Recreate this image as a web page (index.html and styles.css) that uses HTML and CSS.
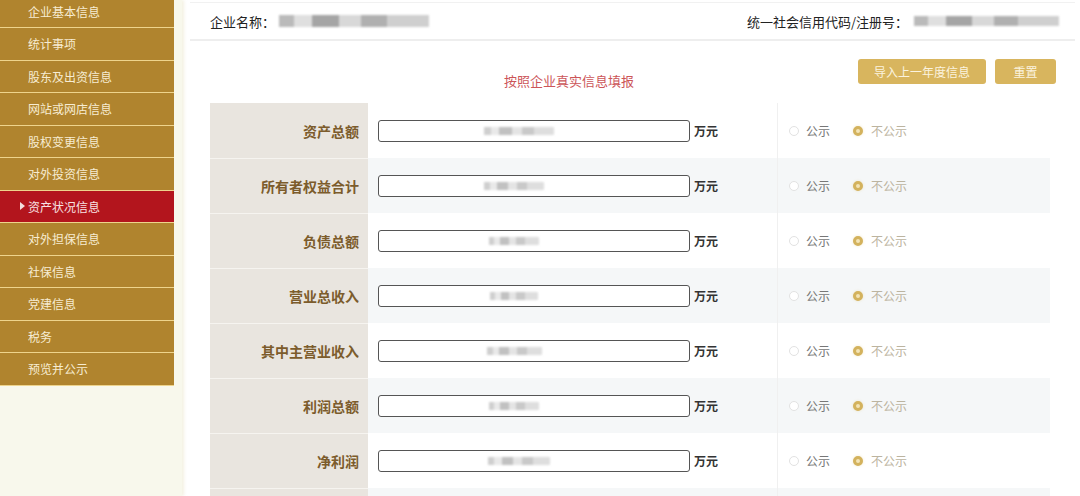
FILE: index.html
```html
<!DOCTYPE html>
<html lang="zh-CN">
<head>
<meta charset="utf-8">
<title>资产状况信息</title>
<link rel="stylesheet" href="styles.css">
</head>
<body>
<div class="page">
  <aside class="sidebar">
    <ul class="nav">
      <li class="nav-item">企业基本信息</li>
      <li class="nav-item">统计事项</li>
      <li class="nav-item">股东及出资信息</li>
      <li class="nav-item">网站或网店信息</li>
      <li class="nav-item">股权变更信息</li>
      <li class="nav-item">对外投资信息</li>
      <li class="nav-item active"><span class="caret"></span>资产状况信息</li>
      <li class="nav-item">对外担保信息</li>
      <li class="nav-item">社保信息</li>
      <li class="nav-item">党建信息</li>
      <li class="nav-item">税务</li>
      <li class="nav-item">预览并公示</li>
    </ul>
  </aside>
  <main class="main">
    <header class="info-bar">
      <div class="info-item">企业名称：<span class="blur blur-name"></span></div>
      <div class="info-item">统一社会信用代码/注册号：<span class="blur blur-code"></span></div>
    </header>
    <div class="toolbar">
      <div class="notice">按照企业真实信息填报</div>
      <div class="actions">
        <button class="btn btn-wide">导入上一年度信息</button>
        <button class="btn">重置</button>
      </div>
    </div>
    <div class="table">
      <div class="row">
        <div class="label">资产总额</div>
        <div class="field"><div class="input"><span class="blur bv1"></span></div><span class="unit">万元</span></div>
        <div class="pub"><span class="radio"></span><span class="opt">公示</span><span class="radio on"></span><span class="opt off">不公示</span></div>
      </div>
      <div class="row alt">
        <div class="label">所有者权益合计</div>
        <div class="field"><div class="input"><span class="blur bv2"></span></div><span class="unit">万元</span></div>
        <div class="pub"><span class="radio"></span><span class="opt">公示</span><span class="radio on"></span><span class="opt off">不公示</span></div>
      </div>
      <div class="row">
        <div class="label">负债总额</div>
        <div class="field"><div class="input"><span class="blur bv3"></span></div><span class="unit">万元</span></div>
        <div class="pub"><span class="radio"></span><span class="opt">公示</span><span class="radio on"></span><span class="opt off">不公示</span></div>
      </div>
      <div class="row alt">
        <div class="label">营业总收入</div>
        <div class="field"><div class="input"><span class="blur bv4"></span></div><span class="unit">万元</span></div>
        <div class="pub"><span class="radio"></span><span class="opt">公示</span><span class="radio on"></span><span class="opt off">不公示</span></div>
      </div>
      <div class="row">
        <div class="label">其中主营业收入</div>
        <div class="field"><div class="input"><span class="blur bv5"></span></div><span class="unit">万元</span></div>
        <div class="pub"><span class="radio"></span><span class="opt">公示</span><span class="radio on"></span><span class="opt off">不公示</span></div>
      </div>
      <div class="row alt">
        <div class="label">利润总额</div>
        <div class="field"><div class="input"><span class="blur bv6"></span></div><span class="unit">万元</span></div>
        <div class="pub"><span class="radio"></span><span class="opt">公示</span><span class="radio on"></span><span class="opt off">不公示</span></div>
      </div>
      <div class="row">
        <div class="label">净利润</div>
        <div class="field"><div class="input"><span class="blur bv7"></span></div><span class="unit">万元</span></div>
        <div class="pub"><span class="radio"></span><span class="opt">公示</span><span class="radio on"></span><span class="opt off">不公示</span></div>
      </div>
      <div class="row alt row-partial">
        <div class="label"></div>
        <div class="field"></div>
        <div class="pub"></div>
      </div>
    </div>
  </main>
</div>
</body>
</html>
```
FILE: styles.css
```css
* { box-sizing: border-box; }
html, body {
  margin: 0;
  padding: 0;
  width: 1080px;
  height: 496px;
  overflow: hidden;
  background: #ffffff;
  font-family: "Microsoft YaHei", "Noto Sans CJK SC", "Noto Sans", sans-serif;
}
.page {
  display: flex;
  height: 496px;
}
.sidebar {
  width: 182px;
  flex: none;
  background: #f8f8ec;
  box-shadow: 2px 0 3px rgba(235, 230, 200, 0.5);
}
.nav {
  list-style: none;
  margin: -4.5px 0 0 0;
  padding: 0;
  width: 174px;
}
.nav-item {
  height: 32.5px;
  display: flex;
  align-items: center;
  padding-left: 28px;
  background: #b0842e;
  color: #f7ecd2;
  font-size: 12px;
  border-bottom: 1px solid #eed48c;
  position: relative;
}
.nav-item.active {
  background: #b3151d;
  color: #f8e2e2;
}
.caret {
  position: absolute;
  left: 20px;
  top: 50%;
  margin-top: -4px;
  width: 0;
  height: 0;
  border-top: 4px solid transparent;
  border-bottom: 4px solid transparent;
  border-left: 5px solid #f4dede;
}
.main {
  flex: 1;
  margin-left: 8px;
  margin-right: 5px;
  display: flex;
  flex-direction: column;
  min-height: 0;
}
.main > * { flex: none; }
.info-bar {
  margin-top: 2px;
  height: 39px;
  border-top: 1px solid #f1f1f1;
  border-bottom: 2px solid #eeeeee;
  display: flex;
  align-items: center;
  justify-content: space-between;
  padding: 0 16px 0 20px;
  font-size: 13px;
  color: #222;
}
.info-item {
  display: flex;
  align-items: center;
}
.blur {
  display: inline-block;
  background: linear-gradient(90deg, #a9a9a9 0 10%, #d8d8d8 10% 22%, #8f8f8f 22% 40%, #cfcfcf 40% 55%, #9d9d9d 55% 72%, #c4c4c4 72% 100%);
  filter: blur(1.2px);
  opacity: 0.8;
}
.blur-name { width: 150px; height: 12px; margin-left: 4px; }
.blur-code { width: 145px; height: 10px; margin-left: 6px; }
.toolbar {
  height: 62px;
  display: flex;
  align-items: flex-start;
}
.notice {
  margin-left: 314px;
  margin-top: 30px;
  font-size: 13px;
  color: #cc5558;
}
.actions {
  margin-left: auto;
  margin-right: 19px;
  margin-top: 18px;
  display: flex;
  gap: 9px;
}
.btn {
  height: 25px;
  width: 61px;
  border: none;
  border-radius: 3px;
  background: #d8b55e;
  color: #fbf3de;
  font-family: inherit;
  font-size: 12px;
  padding: 0;
}
.btn-wide { width: 128px; }
.table {
  margin-left: 20px;
  width: 840px;
}
.row {
  display: flex;
  height: 55px;
  background: #ffffff;
}
.row.alt { background: #f5f7f8; }
.row.row-partial { height: 8px; }
.label {
  width: 158px;
  flex: none;
  background: #e9e5df;
  border-top: 1px solid #f6f4f0;
  display: flex;
  align-items: center;
  justify-content: flex-end;
  padding-right: 9px;
  font-size: 14px;
  font-weight: bold;
  color: #7c5c2c;
}
.row:first-child .label { border-top: none; }
.field {
  width: 410px;
  flex: none;
  display: flex;
  align-items: center;
  padding-left: 10px;
  border-right: 1px solid #f0f0f0;
}
.input {
  width: 312px;
  height: 22px;
  border: 1px solid #555;
  border-radius: 3px;
  background: #fff;
  display: flex;
  align-items: center;
  justify-content: center;
  padding-right: 50px;
}
.input .blur { height: 8px; opacity: 0.55; }
.bv1 { width: 70px; margin-left: 20px; }
.bv2 { width: 60px; margin-left: 10px; }
.bv3 { width: 50px; margin-left: 10px; }
.bv4 { width: 48px; margin-left: 10px; }
.bv5 { width: 55px; margin-left: 10px; }
.bv6 { width: 50px; margin-left: 10px; }
.bv7 { width: 62px; margin-left: 20px; }
.unit {
  margin-left: 4px;
  font-size: 12px;
  font-weight: bold;
  color: #333;
}
.pub {
  flex: 1;
  display: flex;
  align-items: center;
  padding-left: 11px;
  font-size: 12px;
}
.radio {
  width: 10px;
  height: 10px;
  border-radius: 50%;
  border: 1px solid #e2e2e2;
  background: #fff;
  flex: none;
}
.radio.on {
  border: 3px solid #d3b25d;
  background: #f3e4b6;
  margin-left: 23px;
  box-shadow: 0 0 3px rgba(220, 190, 100, 0.3);
}
.opt {
  margin-left: 7px;
  color: #777;
}
.opt.off { color: #bcb4a0; margin-left: 8px; }
```
